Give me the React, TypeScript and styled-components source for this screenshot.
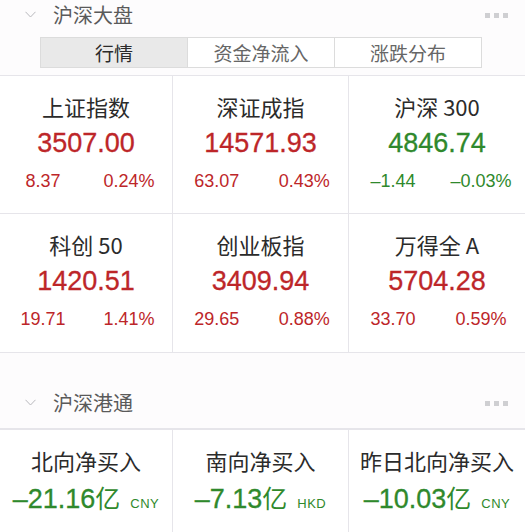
import React from 'react';
import styled, { createGlobalStyle } from 'styled-components';

const GlobalStyle = createGlobalStyle`
  html, body {
    margin: 0;
    padding: 0;
    background: #fdfcfd;
  }
  body {
    font-family: "Liberation Sans", "Noto Sans CJK SC", sans-serif;
    width: 525px;
    height: 532px;
    overflow: hidden;
  }
`;

const Red = '#bd2629';
const Green = '#2f892c';
const Line = '#e6e5ea';

const Page = styled.div`
  width: 525px;
`;

const SectionHeader = styled.div<{ $height: number; $pad: number; $border?: boolean }>`
  height: ${(p) => p.$height}px;
  display: flex;
  align-items: flex-end;
  padding: 0 17px ${(p) => p.$pad}px 25px;
  box-sizing: border-box;
  border-bottom: ${(p) => (p.$border ? `1px solid ${Line}` : 'none')};
`;

const Chevron = styled.svg`
  width: 11px;
  height: 7px;
  margin-right: 17px;
  margin-bottom: 9px;
`;

const Title = styled.div`
  font-size: 20px;
  line-height: 24px;
  color: #5a5a5a;
  font-family: "Noto Sans CJK SC", sans-serif;
  flex: 1;
`;

const Dots = styled.div`
  display: flex;
  gap: 4px;
  margin-bottom: 9px;
`;

const Dot = styled.span`
  width: 5px;
  height: 5px;
  background: #cfcfd2;
`;

const TabBar = styled.div`
  display: flex;
  margin: 10px 43px 7px 40px;
  height: 31px;
  border: 1px solid #dcdcdc;
  box-sizing: border-box;
`;

const Tab = styled.div<{ $active?: boolean }>`
  flex: 1;
  display: flex;
  align-items: center;
  justify-content: center;
  font-family: "Noto Sans CJK SC", sans-serif;
  font-size: 19px;
  color: ${(p) => (p.$active ? '#2a2a2a' : '#666')};
  background: ${(p) => (p.$active ? '#e9e9e9' : '#fff')};
  & + & {
    border-left: 1px solid #dcdcdc;
  }
`;

const Grid = styled.div`
  display: grid;
  grid-template-columns: 173px 176px 176px;
  border-top: 1px solid ${Line};
  background: #fff;
`;

const Cell = styled.div<{ $height: number }>`
  height: ${(p) => p.$height}px;
  box-sizing: border-box;
  display: flex;
  flex-direction: column;
  align-items: center;
  border-bottom: 1px solid ${Line};
  &:not(:nth-child(3n)) {
    border-right: 1px solid ${Line};
  }
`;

const Name = styled.div`
  margin-top: 16px;
  font-family: "Noto Sans CJK SC", sans-serif;
  font-size: 22px;
  line-height: 28px;
  color: #2b2b2b;
`;

const Value = styled.div<{ $color: string }>`
  margin-top: 7px;
  font-size: 27px;
  line-height: 32px;
  color: ${(p) => p.$color};
  display: flex;
  align-items: baseline;
  -webkit-text-stroke: 0.3px ${(p) => p.$color};
`;

const Unit = styled.span`
  font-family: "Noto Sans CJK SC", sans-serif;
  font-size: 25px;
  -webkit-text-stroke: 0;
`;

const Currency = styled.span`
  font-size: 13px;
  margin-left: 10px;
  letter-spacing: 0.5px;
  -webkit-text-stroke: 0;
`;

const Changes = styled.div<{ $color: string }>`
  margin-top: 12px;
  width: 100%;
  display: grid;
  grid-template-columns: 1fr 1fr;
  font-size: 18px;
  line-height: 20px;
  color: ${(p) => p.$color};
  text-align: center;
`;

type Index = { name: string; value: string; chg: string; pct: string; up: boolean };

const indices: Index[] = [
  { name: '上证指数', value: '3507.00', chg: '8.37', pct: '0.24%', up: true },
  { name: '深证成指', value: '14571.93', chg: '63.07', pct: '0.43%', up: true },
  { name: '沪深 300', value: '4846.74', chg: '–1.44', pct: '–0.03%', up: false },
  { name: '科创 50', value: '1420.51', chg: '19.71', pct: '1.41%', up: true },
  { name: '创业板指', value: '3409.94', chg: '29.65', pct: '0.88%', up: true },
  { name: '万得全 A', value: '5704.28', chg: '33.70', pct: '0.59%', up: true },
];

const flows = [
  { name: '北向净买入', value: '–21.16', cur: 'CNY' },
  { name: '南向净买入', value: '–7.13', cur: 'HKD' },
  { name: '昨日北向净买入', value: '–10.03', cur: 'CNY' },
];

const Header = ({
  title,
  height,
  pad,
  border,
}: {
  title: string;
  height: number;
  pad: number;
  border?: boolean;
}) => (
  <SectionHeader $height={height} $pad={pad} $border={border}>
    <Chevron viewBox="0 0 11 7">
      <path d="M0.5 0.8 L5.5 6 L10.5 0.8" fill="none" stroke="#b8b8bc" strokeWidth="1" />
    </Chevron>
    <Title>{title}</Title>
    <Dots>
      <Dot />
      <Dot />
      <Dot />
    </Dots>
  </SectionHeader>
);

const App = () => {
  return (
    <Page>
      <GlobalStyle />
      <Header title="沪深大盘" height={27} pad={0} />
      <TabBar>
        <Tab $active>行情</Tab>
        <Tab>资金净流入</Tab>
        <Tab>涨跌分布</Tab>
      </TabBar>
      <Grid>
        {indices.map((item, i) => {
          const color = item.up ? Red : Green;
          return (
            <Cell key={item.name} $height={i < 3 ? 138 : 139}>
              <Name>{item.name}</Name>
              <Value $color={color}>{item.value}</Value>
              <Changes $color={color}>
                <span>{item.chg}</span>
                <span>{item.pct}</span>
              </Changes>
            </Cell>
          );
        })}
      </Grid>
      <Header title="沪深港通" height={76} pad={13} border />
      <Grid>
        {flows.map((f) => (
          <Cell key={f.name} $height={110}>
            <Name>{f.name}</Name>
            <Value $color={Green}>
              {f.value}
              <Unit>亿</Unit>
              <Currency>{f.cur}</Currency>
            </Value>
          </Cell>
        ))}
      </Grid>
    </Page>
  );
};

export default App;
